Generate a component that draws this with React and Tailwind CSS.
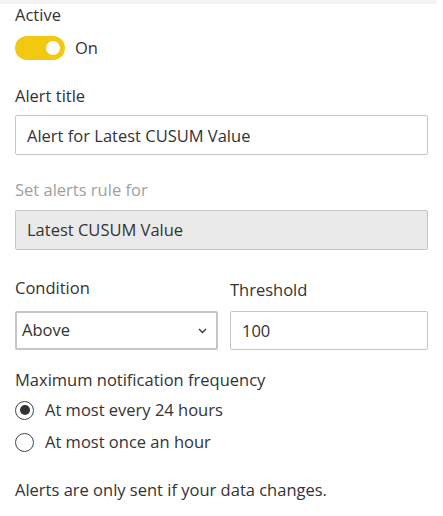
import { useState } from "react";

export default function App() {
  const [active, setActive] = useState(true);
  const [freq, setFreq] = useState("24h");

  return (
    <div
      className="w-full min-h-screen bg-white text-[#333333] text-[16.5px]"
      style={{ fontFamily: '"Segoe UI", "Open Sans", sans-serif' }}
    >
      {/* top strip */}
      <div className="h-1 mr-[6px] bg-[#f3f3f3]" />

      <div className="px-[15px]">
        {/* Active */}
        <div className="leading-[22px]">Active</div>
        <button
          type="button"
          onClick={() => setActive(!active)}
          className="mt-[10px] flex items-center gap-[10px]"
        >
          <span className="w-[50px] h-[24px] rounded-full bg-[#f2c811] flex items-center justify-end pr-[5px]">
            <span className="w-[14px] h-[14px] rounded-full bg-white" />
          </span>
          <span className="leading-[24px]">{active ? "On" : "Off"}</span>
        </button>

        {/* Alert title */}
        <div className="mt-[25px] leading-[22px]">Alert title</div>
        <input
          className="mt-2 w-full h-[40px] border border-[#c8c6c4] rounded-[2px] px-[11px] outline-none"
          defaultValue="Alert for Latest CUSUM Value"
        />

        {/* Set alerts rule for */}
        <div className="mt-6 leading-[22px] text-[#a19f9d]">Set alerts rule for</div>
        <div className="mt-[9px] w-full h-[40px] border border-[#c8c6c4] rounded-[2px] bg-[#eaeaea] px-[11px] flex items-center">
          Latest CUSUM Value
        </div>

        {/* Condition + Threshold */}
        <div className="mt-[27px] grid grid-cols-[203px_minmax(0,1fr)] gap-x-3">
          <div className="leading-[22px]">Condition</div>
          <div className="leading-[22px] mt-[2px]">Threshold</div>
          <div className="mt-[10px] h-[39px] border-2 border-[#c8c6c4] rounded-[2px] flex items-center justify-between pl-[5px] pr-[9px]">
            <span>Above</span>
            <svg width="9" height="6" viewBox="0 0 9 6" fill="none">
              <path d="M1 1l3.5 3.5L8 1" stroke="#333" strokeWidth="1.3" />
            </svg>
          </div>
          <input
            className="mt-[10px] w-full min-w-0 h-[39px] border border-[#c8c6c4] rounded-[2px] px-[11px] outline-none"
            defaultValue="100"
          />
        </div>

        {/* Frequency */}
        <div className="mt-[19px] leading-[22px]">Maximum notification frequency</div>
        <div className="mt-[3px]">
          {[
            ["24h", "At most every 24 hours"],
            ["1h", "At most once an hour"],
          ].map(([k, label]) => (
            <label key={k} className="h-8 flex items-center gap-[11px] cursor-pointer" onClick={() => setFreq(k)}>
              <span className="w-[19px] h-[19px] rounded-full border border-[#444] flex items-center justify-center">
                {freq === k && <span className="w-[10px] h-[10px] rounded-full bg-[#333]" />}
              </span>
              <span>{label}</span>
            </label>
          ))}
        </div>

        <div className="mt-[21px] leading-[22px]">Alerts are only sent if your data changes.</div>
      </div>
    </div>
  );
}
